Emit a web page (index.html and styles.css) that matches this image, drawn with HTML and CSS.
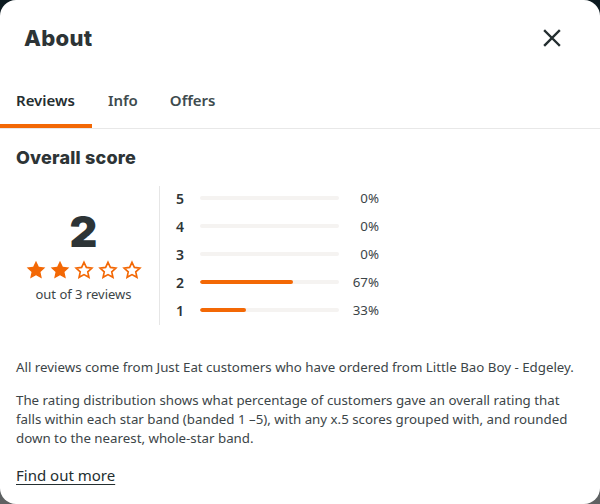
FILE: index.html
```html
<!DOCTYPE html>
<html lang="en">
<head>
<meta charset="utf-8">
<title>About</title>
<link rel="stylesheet" href="styles.css">
</head>
<body>
<div class="modal">
  <header class="head">
    <h1 class="title">About</h1>
    <button class="close" aria-label="Close">
      <svg viewBox="0 0 18 18" width="18" height="18"><path d="M2 2L16 16M16 2L2 16" stroke="#242e30" stroke-width="2.4" stroke-linecap="square" fill="none"/></svg>
    </button>
  </header>
  <nav class="tabs">
    <span class="tab active">Reviews</span>
    <span class="tab">Info</span>
    <span class="tab">Offers</span>
  </nav>
  <section class="content">
    <h2 class="sub">Overall score</h2>
    <div class="score">
      <div class="summary">
        <div class="big">2</div>
        <div class="stars">
          <svg viewBox="0 0 24 24" class="star"><path class="fill" d="M12 1.8l3.1 6.6 7.1.8-5.3 4.9 1.5 7.1L12 17.6l-6.4 3.6 1.5-7.1-5.3-4.9 7.1-.8z"/></svg>
          <svg viewBox="0 0 24 24" class="star"><path class="fill" d="M12 1.8l3.1 6.6 7.1.8-5.3 4.9 1.5 7.1L12 17.6l-6.4 3.6 1.5-7.1-5.3-4.9 7.1-.8z"/></svg>
          <svg viewBox="0 0 24 24" class="star"><path class="line" d="M12 3.6l2.6 5.6 6 .7-4.5 4.1 1.3 6L12 17l-5.4 3 1.3-6-4.5-4.1 6-.7z"/></svg>
          <svg viewBox="0 0 24 24" class="star"><path class="line" d="M12 3.6l2.6 5.6 6 .7-4.5 4.1 1.3 6L12 17l-5.4 3 1.3-6-4.5-4.1 6-.7z"/></svg>
          <svg viewBox="0 0 24 24" class="star"><path class="line" d="M12 3.6l2.6 5.6 6 .7-4.5 4.1 1.3 6L12 17l-5.4 3 1.3-6-4.5-4.1 6-.7z"/></svg>
        </div>
        <div class="count">out of 3 reviews</div>
      </div>
      <div class="dist">
        <div class="row"><span class="num">5</span><span class="bar"><span class="fillbar" style="width:0%"></span></span><span class="pct">0%</span></div>
        <div class="row"><span class="num">4</span><span class="bar"><span class="fillbar" style="width:0%"></span></span><span class="pct">0%</span></div>
        <div class="row"><span class="num">3</span><span class="bar"><span class="fillbar" style="width:0%"></span></span><span class="pct">0%</span></div>
        <div class="row"><span class="num">2</span><span class="bar"><span class="fillbar" style="width:67%"></span></span><span class="pct">67%</span></div>
        <div class="row"><span class="num">1</span><span class="bar"><span class="fillbar" style="width:33%"></span></span><span class="pct">33%</span></div>
      </div>
    </div>
    <p class="para first">All reviews come from Just Eat customers who have ordered from Little Bao Boy - Edgeley.</p>
    <p class="para">The rating distribution shows what percentage of customers gave an overall rating that falls within each star band (banded 1 –5), with any x.5 scores grouped with, and rounded down to the nearest, whole-star band.</p>
    <a class="more" href="#">Find out more</a>
  </section>
</div>
</body>
</html>
```
FILE: styles.css
```css
* { box-sizing: border-box; }
html, body { margin: 0; padding: 0; }
body {
  width: 600px;
  height: 504px;
  background: linear-gradient(#0c1a20 0%, #33393c 60%, #5f6263 100%);
  font-family: "Noto Sans", "Open Sans", sans-serif;
  color: #242e30;
  overflow: hidden;
}
.modal {
  width: 600px;
  height: 504px;
  background: #fff;
  border-radius: 16px;
  overflow: hidden;
}
.head {
  display: flex;
  justify-content: space-between;
  align-items: center;
  padding: 16px 39px 0 24px;
  height: 60px;
}
.title {
  margin: 0;
  font-family: Inter, "Noto Sans", sans-serif;
  font-weight: 800;
  font-size: 22px;
  letter-spacing: 0.3px;
  color: #2d3436;
}
.close {
  border: 0;
  background: none;
  padding: 0;
  width: 18px;
  height: 18px;
  display: flex;
}
.tabs {
  display: flex;
  margin-top: 10px;
  border-bottom: 1px solid #e8e8e8;
  height: 59px;
}
.tab {
  padding: 20px 16px 0;
  font-size: 15px;
  font-weight: 600;
  color: #3e4b4e;
}
.tab.active {
  color: #242e30;
  border-bottom: 4px solid #f36805;
  padding-right: 17px;
}
.content { padding: 0 16px; }
.sub {
  margin: 18px 0 0;
  font-family: Inter, "Noto Sans", sans-serif;
  font-weight: 800;
  font-size: 18px;
  color: #2d3436;
  letter-spacing: 0.2px;
}
.score {
  display: flex;
  margin-top: 18px;
}
.summary {
  width: 144px;
  padding-right: 8px;
  border-right: 1px solid #e6e6e6;
  display: flex;
  flex-direction: column;
  align-items: center;
  justify-content: center;
}
.big {
  font-family: Inter, "Noto Sans", sans-serif;
  font-weight: 900;
  font-size: 43px;
  line-height: 44px;
  color: #2d3436;
}
.stars {
  display: flex;
  gap: 2px;
  margin-top: 6px;
}
.star { width: 22px; height: 22px; }
.star .fill { fill: #f36805; }
.star .line { fill: none; stroke: #f36805; stroke-width: 1.8; stroke-linejoin: miter; }
.count {
  margin-top: 4px;
  font-size: 13px;
  color: #3c4548;
}
.dist {
  display: flex;
  flex-direction: column;
  padding-left: 16px;
  margin-top: -2px;
  padding-bottom: 1px;
}
.row {
  display: flex;
  align-items: center;
  height: 28px;
}
.num {
  width: 24px;
  font-size: 14px;
  font-weight: 600;
  color: #2d3436;
}
.bar {
  width: 139px;
  height: 4px;
  border-radius: 2px;
  background: #f5f3f1;
  overflow: hidden;
  display: flex;
}
.fillbar {
  height: 4px;
  background: #f36805;
  border-radius: 2px;
}
.pct {
  width: 40px;
  text-align: right;
  font-size: 13.3px;
  color: #3c4548;
}
.para {
  margin: 0;
  font-size: 13.3px;
  line-height: 19px;
  color: #3c4548;
}
.para.first { margin-top: 33px; margin-bottom: 14px; }
.more {
  display: inline-block;
  margin-top: 17px;
  font-size: 15px;
  color: #242e30;
  text-decoration: underline;
  text-underline-offset: 3px;
}
```
